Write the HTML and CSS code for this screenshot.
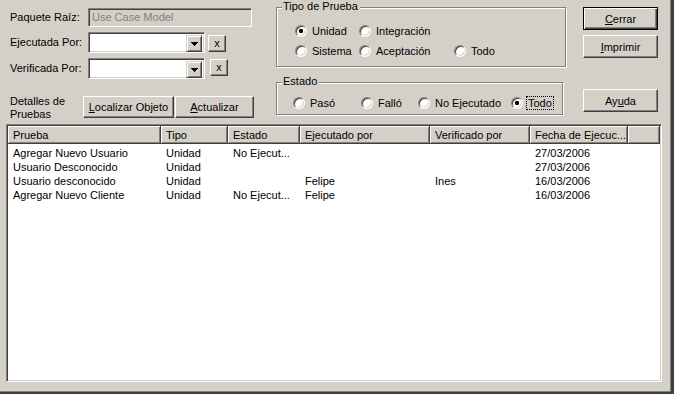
FILE: index.html
```html
<!DOCTYPE html>
<html>
<head>
<meta charset="utf-8">
<link rel="stylesheet" href="styles.css">
</head>
<body>
<div class="window">
  <div class="top">
    <div class="form">
      <div class="frow r1">
        <span class="lbl">Paquete Raíz:</span>
        <div class="field disabled">Use Case Model</div>
      </div>
      <div class="frow r2">
        <span class="lbl">Ejecutada Por:</span>
        <div class="combo"><span class="ddbtn"><svg width="7" height="4" viewBox="0 0 7 4"><path d="M0 0h7v1h-1v1h-1v1h-1v1h-1v-1h-1v-1h-1v-1h-1z" fill="#000"/></svg></span></div>
        <button class="xbtn">x</button>
      </div>
      <div class="frow r3">
        <span class="lbl">Verificada Por:</span>
        <div class="combo"><span class="ddbtn"><svg width="7" height="4" viewBox="0 0 7 4"><path d="M0 0h7v1h-1v1h-1v1h-1v1h-1v-1h-1v-1h-1v-1h-1z" fill="#000"/></svg></span></div>
        <button class="xbtn x2">x</button>
      </div>
      <div class="frow r4">
        <span class="lbl lbl2">Detalles de<br>Pruebas</span>
        <button class="btn loc"><u>L</u>ocalizar Objeto</button>
        <button class="btn act"><u>A</u>ctualizar</button>
      </div>
    </div>
    <div class="groups">
      <div class="group tipo">
        <span class="legend">Tipo de Prueba</span>
        <div class="tgrid">
          <label class="radio"><span class="rc on"></span><span class="rt">Unidad</span></label>
          <label class="radio"><span class="rc"></span><span class="rt">Integración</span></label>
          <span></span>
          <label class="radio"><span class="rc"></span><span class="rt">Sistema</span></label>
          <label class="radio"><span class="rc"></span><span class="rt">Aceptación</span></label>
          <label class="radio"><span class="rc"></span><span class="rt">Todo</span></label>
        </div>
      </div>
      <div class="group estado">
        <span class="legend">Estado</span>
        <div class="egrid">
          <label class="radio"><span class="rc"></span><span class="rt">Pasó</span></label>
          <label class="radio"><span class="rc"></span><span class="rt">Falló</span></label>
          <label class="radio"><span class="rc"></span><span class="rt">No Ejecutado</span></label>
          <label class="radio"><span class="rc on"></span><span class="rt focus">Todo</span></label>
        </div>
      </div>
    </div>
    <div class="actions">
      <button class="btn abtn default"><u>C</u>errar</button>
      <button class="btn abtn imp"><u>I</u>mprimir</button>
      <button class="btn abtn ayu">Ay<u>u</u>da</button>
    </div>
  </div>
  <div class="list">
    <div class="lhead">
      <div class="hc">Prueba</div>
      <div class="hc">Tipo</div>
      <div class="hc">Estado</div>
      <div class="hc">Ejecutado por</div>
      <div class="hc">Verificado por</div>
      <div class="hc">Fecha de Ejecuc...</div>
      <div class="hc"></div>
    </div>
    <div class="lbody">
      <div class="lrow"><span>Agregar Nuevo Usuario</span><span>Unidad</span><span>No Ejecut...</span><span></span><span></span><span>27/03/2006</span></div>
      <div class="lrow"><span>Usuario Desconocido</span><span>Unidad</span><span></span><span></span><span></span><span>27/03/2006</span></div>
      <div class="lrow"><span>Usuario desconocido</span><span>Unidad</span><span></span><span>Felipe</span><span>Ines</span><span>16/03/2006</span></div>
      <div class="lrow"><span>Agregar Nuevo Cliente</span><span>Unidad</span><span>No Ejecut...</span><span>Felipe</span><span></span><span>16/03/2006</span></div>
    </div>
  </div>
</div>
</body>
</html>
```

FILE: styles.css
```css
html, body {
  margin: 0;
  padding: 0;
  background: #d4d0c8;
}
.window {
  box-sizing: border-box;
  width: 674px;
  height: 394px;
  padding: 7px 0 0 6px;
  background: #d4d0c8;
  border-right: 3px solid #404040;
  border-bottom: 2px solid #404040;
  box-shadow: inset -1px -1px #808080;
  font-family: "Liberation Sans", Arial, sans-serif;
  font-size: 11px;
  color: #000;
  overflow: hidden;
}
.top {
  display: flex;
  align-items: flex-start;
  height: 117px;
}
.form {
  width: 248px;
  margin-top: 1px;
}
.frow {
  display: flex;
  align-items: flex-start;
}
.lbl {
  flex: 0 0 78px;
  padding-left: 4px;
  white-space: nowrap;
}
.r1 { height: 19px; line-height: 19px; }
.r2, .r3 { height: 21px; line-height: 21px; margin-top: 5px; }
.r4 { margin-top: 16px; }
.lbl2 {
  flex: 0 0 69px;
  line-height: 13px;
}
.field {
  box-sizing: border-box;
  width: 164px;
  height: 19px;
  border: 1px solid;
  border-color: #808080 #fff #fff #808080;
  box-shadow: inset 1px 1px #404040, inset -1px -1px #d4d0c8;
  padding-left: 3px;
  line-height: 17px;
}
.field.disabled {
  background: #d4d0c8;
  color: #808080;
}
.combo {
  box-sizing: border-box;
  width: 117px;
  height: 21px;
  background: #fff;
  border: 1px solid;
  border-color: #808080 #fff #fff #808080;
  box-shadow: inset 1px 1px #404040, inset -1px -1px #d4d0c8;
  padding: 2px 2px 0 0;
  display: flex;
  justify-content: flex-end;
  align-items: flex-start;
}
.ddbtn {
  box-sizing: border-box;
  width: 16px;
  height: 17px;
  background: #d4d0c8;
  border: 1px solid;
  border-color: #d4d0c8 #404040 #404040 #d4d0c8;
  box-shadow: inset 1px 1px #fff, inset -1px -1px #808080;
  display: flex;
  align-items: center;
  justify-content: center;
}
.ddbtn svg { display: block; margin-top: 1px; }
button {
  font-family: "Liberation Sans", Arial, sans-serif;
  font-size: 11px;
  color: #000;
  background: #d4d0c8;
  border: 1px solid;
  border-color: #fff #404040 #404040 #fff;
  box-shadow: inset -1px -1px #808080;
  padding: 0;
  margin: 0;
  border-radius: 0;
  box-sizing: border-box;
  line-height: 12px;
}
.xbtn {
  width: 18px;
  height: 17px;
  margin-left: 3px;
  margin-top: 3px;
  padding-bottom: 2px;
}
.xbtn.x2 {
  margin-left: 5px;
  margin-top: 1px;
}
.btn.loc {
  width: 93px;
  height: 22px;
  margin-left: 4px;
  margin-top: 1px;
}
.btn.act {
  width: 81px;
  height: 22px;
  margin-left: 1px;
  margin-top: 1px;
}
.groups {
  margin-left: 22px;
}
.group {
  position: relative;
  box-sizing: border-box;
  border: 1px solid #808080;
  box-shadow: inset 1px 1px #fff, 1px 1px #fff;
}
.legend {
  position: absolute;
  top: -8px;
  left: 5px;
  padding: 0 2px 0 1px;
  background: #d4d0c8;
  line-height: 13px;
}
.tipo {
  width: 290px;
  height: 60px;
  padding: 16px 0 0 18px;
}
.tgrid {
  display: grid;
  grid-template-columns: 64px 95px auto;
  row-gap: 6px;
}
.estado {
  width: 287px;
  height: 33px;
  margin-top: 15px;
  padding: 13px 0 0 16px;
}
.egrid {
  display: grid;
  grid-template-columns: 68px 57px 93px auto;
}
.radio {
  display: flex;
  align-items: center;
  gap: 3px;
  height: 14px;
  white-space: nowrap;
}
.rc {
  box-sizing: border-box;
  flex: 0 0 12px;
  width: 12px;
  height: 12px;
  border-radius: 50%;
  border: 1px solid;
  border-color: #808080 #fff #fff #808080;
  box-shadow: inset 1px 1px #404040, inset -1px -1px #d4d0c8;
  background: #fff;
}
.rc.on {
  background: radial-gradient(circle, #000 0 2px, #fff 2.4px);
}
.rt {
  padding: 0 1px;
  border: 1px solid transparent;
  line-height: 12px;
}
.rt.focus {
  border: 1px dotted #000;
}
.actions {
  margin-left: 17px;
  display: flex;
  flex-direction: column;
}
.abtn {
  width: 75px;
  height: 23px;
}
.abtn.default {
  border: 1px solid #000;
  box-shadow: inset 1px 1px #fff, inset -1px -1px #404040, inset -2px -2px #808080;
}
.abtn.imp { margin-top: 5px; }
.abtn.ayu { margin-top: 31px; }
.list {
  box-sizing: border-box;
  width: 656px;
  height: 258px;
  background: #fff;
  border: 1px solid;
  border-color: #808080 #fff #fff #808080;
  box-shadow: inset 1px 1px #404040, inset -1px -1px #d4d0c8;
  padding: 1px 1px 1px 1px;
}
.lhead, .lrow {
  display: grid;
  grid-template-columns: 153px 67px 72px 130px 100px 98px 1fr;
}
.hc {
  box-sizing: border-box;
  height: 18px;
  padding: 1px 0 0 5px;
  line-height: 16px;
  background: #d4d0c8;
  border-right: 1px solid #404040;
  border-bottom: 1px solid #404040;
  box-shadow: inset 1px 1px #fff, inset -1px -1px #808080;
  white-space: nowrap;
  overflow: hidden;
}
.lbody {
  padding-top: 2px;
}
.lrow {
  height: 14px;
  line-height: 14px;
}
.lrow span {
  padding-left: 5px;
  white-space: nowrap;
  overflow: hidden;
}
```
